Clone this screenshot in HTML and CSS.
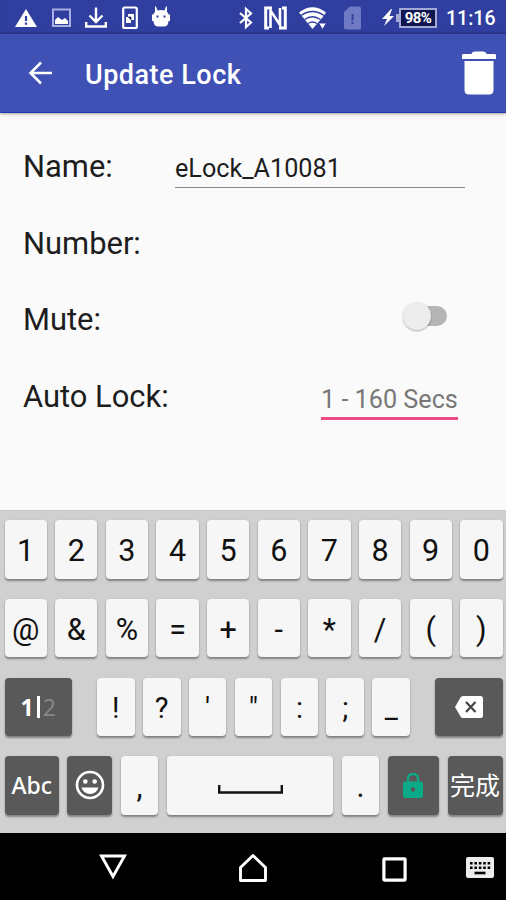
FILE: index.html
```html
<!doctype html>
<html lang="en">
<head>
  <meta charset="utf-8">
  <title>Update Lock</title>
  <meta name="viewport" content="width=device-width, initial-scale=1">
  <link rel="stylesheet" href="styles.css">
</head>
<body>

  <!-- Status bar -->
  <div class="statusbar">
    <div class="notifs">
      <svg width="22" height="24" viewBox="0 0 22 24"><path fill="#fff" d="M11 3 22 21H0z"/><path stroke="#303f9f" stroke-width="2.2" d="M11 10v5M11 16.500v2.200"/></svg>
      <svg width="19" height="24" viewBox="0 0 19 24"><rect x="1" y="3.500" width="17" height="16.500" fill="none" stroke="#a9afe0" stroke-width="2"/><path fill="#fff" d="M3 18v-4l3-3 4 3 3-2 3 3v3z"/></svg>
      <svg width="22" height="24" viewBox="0 0 22 24" fill="none" stroke="#fff" stroke-width="2.400"><path d="M11 1.500v14M4.500 9.500l6.500 6.500 6.500-6.500M1.200 16v4.500h19.600V16"/></svg>
      <svg width="16" height="24" viewBox="0 0 16 24"><rect x="1.200" y="1.500" width="13.600" height="20.500" rx="1.500" fill="none" stroke="#fff" stroke-width="2.200"/><path fill="#fff" d="M6 8h6v6H9v3H4v-6h2z"/><path stroke="#303f9f" stroke-width=".7" d="M6 11h3v3"/></svg>
      <svg width="18" height="24" viewBox="0 0 18 24"><path fill="#fff" d="M3 .5h1l1.500 4q3.500-1 7 0l1.500-4h1L15 6q1.500 1 1.500 2.500H18V15h-1.500q0 5.500-5 5.500h-5q-5 0-5-5.500H0V8.500h1.500Q1.500 7 3 6z"/><path fill="#303f9f" d="M4.500 9.500h2v2h-2zM11.500 9.500h2v2h-2z"/></svg>
    </div>
    <div class="system">
      <svg class="bt" width="14" height="24" viewBox="0 0 14 24" fill="none" stroke="#fff" stroke-width="2.200"><path d="M1 7l11 9.500-5 4.500V3l5 4.500L1 17"/></svg>
      <svg class="nfc" width="23" height="24" viewBox="0 0 23 24" fill="none" stroke="#fff"><path stroke-width="3" d="M8 2H1.700v20H5M15 22h6.300V2H18"/><path stroke-width="2.600" d="M6.500 22V4.500L16 19V2"/></svg>
      <svg class="wifi" width="28" height="24" viewBox="0 0 28 24"><path fill="#fff" d="M0 6.500Q13.500-4 27 6.500L23 12l-9.500 11z"/><path fill="none" stroke="#303f9f" stroke-width="1.400" d="M2 9.500q11.500-8 23 0M5.500 13.500q8-5.500 16 0M9 17.500q4.500-3 9 0"/><path fill="#fff" stroke="#303f9f" stroke-width="1" d="M19.500 17h8l-4 6.500z"/></svg>
      <svg class="sim" width="17" height="24" viewBox="0 0 17 24"><path fill="#6f7ac4" d="M6 .5h9q2 0 2 2v19q0 2-2 2H2q-2 0-2-2V6z"/><path stroke="#303f9f" stroke-width="2" d="M8.500 8v6.500M8.500 16v2"/></svg>
      <svg class="bolt" width="12" height="24" viewBox="0 0 12 24"><path fill="#fff" d="M9 3 0 13h5L2 20l10-10H7.500L10 3z"/></svg>
      <span class="battery">98%</span>
      <span class="clock">11:16</span>
    </div>
  </div>

  <header class="toolbar">
    <svg class="back" width="24" height="24" viewBox="0 0 24 24" fill="none" stroke="#fff" stroke-width="2.500"><path d="M13 1.500 2.500 12 13 22.500M2.500 12H24"/></svg>
    <h1 class="title">Update Lock</h1>
    <svg class="trash" width="34" height="44" viewBox="0 0 34 44" fill="#fff"><path d="M0 8V4.500Q0 3 1 3h8.500Q10 .5 13 .5h8q3 0 3.500 2.500H33q1 0 1 1.500V8zM2.500 10h29v29q0 4.500-4.500 4.500H7q-4.500 0-4.500-4.500z"/></svg>
  </header>

  <main class="form">
    <div class="row">
      <span class="label">Name:</span>
      <span class="input name">eLock_A10081</span>
    </div>
    <div class="row">
      <span class="label">Number:</span>
    </div>
    <div class="row">
      <span class="label">Mute:</span>
      <span class="switch"><span class="thumb"></span></span>
    </div>
    <div class="row">
      <span class="label">Auto Lock:</span>
      <span class="input secs">1 - 160 Secs</span>
    </div>
  </main>

  <!-- Keyboard, symbols page 1 -->
  <section class="keyboard">
    <div class="keys ten">
      <span class="key">1</span><span class="key">2</span><span class="key">3</span><span class="key">4</span><span class="key">5</span><span class="key">6</span><span class="key">7</span><span class="key">8</span><span class="key">9</span><span class="key">0</span>
    </div>
    <div class="keys ten">
      <span class="key">@</span><span class="key">&amp;</span><span class="key">%</span><span class="key">=</span><span class="key">+</span><span class="key">-</span><span class="key">*</span><span class="key">/</span><span class="key">(</span><span class="key">)</span>
    </div>
    <div class="keys third">
      <span class="key dark page"><b>1</b><i></i><span>2</span></span>
      <div class="punct">
        <span class="key">!</span><span class="key">?</span><span class="key">'</span><span class="key">"</span><span class="key">:</span><span class="key">;</span><span class="key">_</span>
      </div>
      <span class="key dark">
        <svg width="28" height="22" viewBox="0 0 28 22"><path fill="#fff" d="M8 0h17.500Q28 0 28 2.500v17q0 2.500-2.500 2.500H8q-1.500 0-2.500-1.500L0 11l5.500-9.500Q6.500 0 8 0z"/><path stroke="#444" stroke-width="2.200" d="M11 6l9.500 10M20.500 6 11 16"/></svg>
      </span>
    </div>
    <div class="keys fourth">
      <span class="key dark abc">Abc</span>
      <span class="key dark smile">
        <svg width="30" height="30" viewBox="0 0 30 30"><circle cx="15" cy="15" r="13" fill="none" stroke="#fff" stroke-width="2.600"/><circle cx="10.300" cy="11.500" r="2.300" fill="#fff"/><circle cx="19.700" cy="11.500" r="2.300" fill="#fff"/><path fill="#fff" d="M6.500 17.500h17q-2 6.500-8.500 6.500t-8.500-6.500z"/></svg>
      </span>
      <span class="key">,</span>
      <span class="key space">
        <svg width="65" height="9" viewBox="0 0 65 9" fill="none" stroke="#111" stroke-width="2.400"><path d="M1.200 0v7.500h62.600V0"/></svg>
      </span>
      <span class="key">.</span>
      <span class="key dark">
        <svg width="20" height="25" viewBox="0 0 20 25"><path fill="none" stroke="#0bab8a" stroke-width="2.200" d="M5 9V6q0-4.800 5-4.800T15 6v3"/><rect y="8.500" width="20" height="16.500" rx="2.500" fill="#0bab8a"/><circle cx="10" cy="16.500" r="2.200" fill="#555"/></svg>
      </span>
      <span class="key dark done">完成</span>
    </div>
  </section>

  <nav class="navbar">
    <svg class="nav-back" width="28" height="26" viewBox="0 0 28 26" fill="none" stroke="#fff" stroke-width="2.900"><path d="M2.500 2h23L14 22.500z"/></svg>
    <svg class="nav-home" width="30" height="30" viewBox="0 0 30 30" fill="none" stroke="#fff" stroke-width="2.900" stroke-linejoin="round"><path d="M2.500 27.500V14.500L15 2.500l12.500 12v13z"/></svg>
    <svg class="nav-recent" width="25" height="25" viewBox="0 0 25 25" fill="none" stroke="#fff" stroke-width="3.200"><rect x="1.900" y="1.900" width="21.200" height="21.200" rx=".5"/></svg>
    <svg class="nav-ime" width="28" height="21" viewBox="0 0 28 21"><rect width="28" height="21" rx="2" fill="#ececec"/><path stroke="#000" stroke-width="2.600" stroke-dasharray="2.600 1.800" d="M4 6.300h21M4 10.700h21"/><path stroke="#000" stroke-width="2.600" d="M8.500 16h11"/></svg>
  </nav>

</body>
</html>
```

FILE: styles.css
```css
:root{
  --primary:#3f51b5; --primary-dark:#303f9f; --accent:#ee4a87;
  --bg:#fafafa; --text:#1d1d1d; --hint:#777;
  --kb:#d0d0d0; --key:#f6f6f6; --key-dark:#595959;
}
*{ box-sizing:border-box }
body{ margin:0; width:506px; height:900px; overflow:hidden; display:flex; flex-direction:column; background:var(--bg); color:var(--text); font-family:Roboto,"Noto Sans CJK SC",sans-serif; }
svg{ display:block; flex:none }

/* Status bar */
.statusbar{ height:34px; background:var(--primary-dark); box-shadow:inset 0 -2px 1px #2b3990; display:flex; justify-content:space-between; align-items:center; padding:1px 10px 0 15px; color:#fff; }
.notifs{ display:flex; gap:14.500px; align-items:center }
.system{ display:flex; align-items:center }
.nfc{ margin-left:11px }
.wifi{ margin-left:12px }
.sim{ margin-left:17px }
.bolt{ margin-left:21px }
.battery{ position:relative; width:38px; height:20px; margin-left:5px; border:2px solid #a3a8d4; background:#10164f; font-size:15px; font-weight:700; line-height:16px; text-align:center; letter-spacing:-.6px; }
.battery::before{ content:""; position:absolute; left:-5px; top:4px; width:3px; height:8px; background:#a3a8d4; }
.clock{ margin:2px 0 0 9px; width:50px; font-size:19.500px; line-height:24px; font-weight:500; white-space:nowrap; }

/* Toolbar */
.toolbar{ height:79px; flex:none; background:var(--primary); border-bottom:1px solid #2338a8; box-shadow:0 1px 3px rgba(0,0,0,.35); display:flex; align-items:center; padding:0 10px 0 28px; color:#fff; }
.title{ margin:4px 0 0 33px; font-size:27px; line-height:32px; font-weight:500; letter-spacing:.5px; flex:1; }
.trash{ margin-bottom:1px }

/* Form */
.form{ height:397px; flex:none; padding:15px 41px 0 23px }
.row{ height:76.700px; display:flex; justify-content:space-between; align-items:flex-start; }
.label{ font-size:30.900px; line-height:36px; padding-top:21px }
.input{ font-size:25.200px; line-height:32px; white-space:nowrap; }
.name{ width:290px; height:37px; margin-top:23px; padding-top:2px; border-bottom:1.500px solid #888; }
.secs{ width:137px; height:37px; margin:25px 7px 0 0; padding-top:1px; color:var(--hint); border-bottom:3px solid var(--accent); }
.switch{ width:37px; height:20px; margin:25px 18px 0 0; border-radius:10px; background:#b5b5b5; position:relative; }
.thumb{ position:absolute; left:-7px; top:-4px; width:28px; height:28px; border-radius:50%; background:#ededed; box-shadow:0 1px 2px rgba(0,0,0,.3); }

/* Keyboard */
.keyboard{ height:323px; flex:none; background:var(--kb); border-top:1px solid #c6c6c6; padding:9px 3.500px 0 4.500px; display:flex; flex-direction:column; gap:20.300px; }
.keys{ display:grid; height:58.500px; column-gap:8.300px; }
.ten{ grid-template-columns:repeat(10,1fr) }
.third{ grid-template-columns:67.500px 1fr 67.500px; column-gap:25px }
.punct{ display:grid; grid-template-columns:repeat(7,1fr); column-gap:8.300px }
.fourth{ grid-template-columns:54.500px 45px 37.700px 1fr 37.700px 51.500px 55px }
.key{ display:flex; align-items:center; justify-content:center; min-width:0; padding-top:3px; background:var(--key); border-radius:4px; box-shadow:0 1.500px 2px rgba(0,0,0,.38); color:#111; font-size:30.500px; line-height:36px; }
.punct .key{ font-size:29px; padding-top:2px }
.dark{ background:var(--key-dark); color:#fff; padding-top:0; }
.page{ gap:3px; font-size:23px; }
.page b{ font-family:"Open Sans",sans-serif; font-weight:700; }
.page i{ width:3px; height:22px; background:#fff; }
.page span{ color:#888; font-family:"Open Sans",sans-serif; }
.abc{ font-family:"Noto Sans",sans-serif; font-size:23px; font-weight:500; padding-bottom:2px; }
.smile{ padding-bottom:2px }
.space{ padding-top:8px }
.done{ font-family:"Noto Sans CJK SC",sans-serif; font-size:25px; padding-bottom:3px; white-space:nowrap; }

/* System navigation */
.navbar{ flex:1; background:#000; display:flex; align-items:flex-start; padding:20px 12px 0 99px; }
.nav-back{ margin-top:1px }
.nav-home{ margin-left:111px }
.nav-recent{ margin:4px 0 0 114px }
.nav-ime{ margin:4px 0 0 auto }
```
